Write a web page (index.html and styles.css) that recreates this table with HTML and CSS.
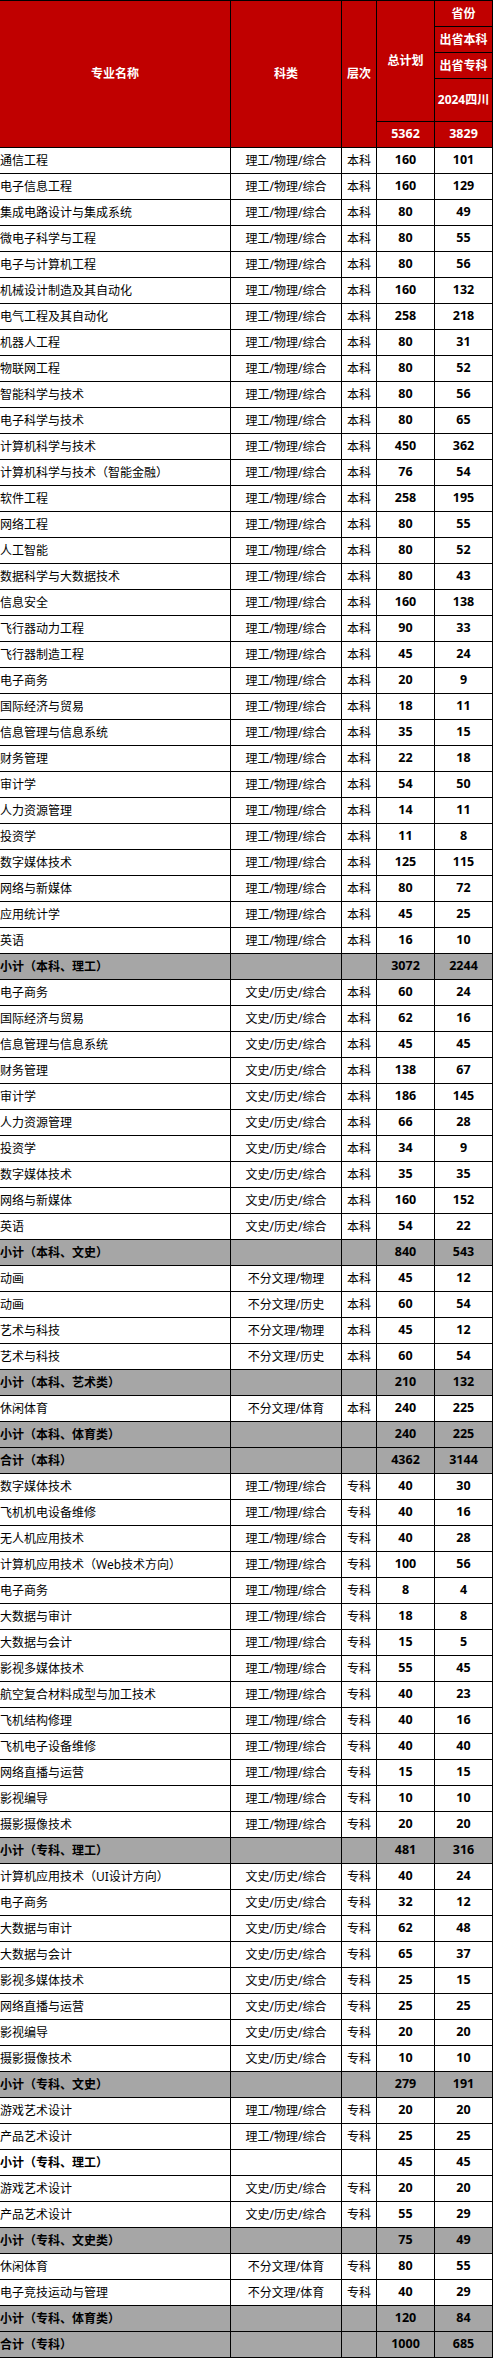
FILE: index.html
```html
<!DOCTYPE html>
<html lang="zh-CN">
<head>
<meta charset="utf-8">
<title>招生计划</title>
<link rel="stylesheet" href="styles.css">
</head>
<body>
<div class="sheet">
  <div class="c hd h-name">专业名称</div>
  <div class="c hd h-type">科类</div>
  <div class="c hd h-level">层次</div>
  <div class="c hd h-total">总计划</div>
  <div class="c hd h-p1">省份</div>
  <div class="c hd h-p2">出省本科</div>
  <div class="c hd h-p3">出省专科</div>
  <div class="c hd h-p4">2024四川</div>
  <div class="c hd num h-t5">5362</div>
  <div class="c hd num h-t6">3829</div>

  <div class="r"><div class="c name">通信工程</div><div class="c">理工/物理/综合</div><div class="c">本科</div><div class="c num">160</div><div class="c num">101</div></div>
  <div class="r"><div class="c name">电子信息工程</div><div class="c">理工/物理/综合</div><div class="c">本科</div><div class="c num">160</div><div class="c num">129</div></div>
  <div class="r"><div class="c name">集成电路设计与集成系统</div><div class="c">理工/物理/综合</div><div class="c">本科</div><div class="c num">80</div><div class="c num">49</div></div>
  <div class="r"><div class="c name">微电子科学与工程</div><div class="c">理工/物理/综合</div><div class="c">本科</div><div class="c num">80</div><div class="c num">55</div></div>
  <div class="r"><div class="c name">电子与计算机工程</div><div class="c">理工/物理/综合</div><div class="c">本科</div><div class="c num">80</div><div class="c num">56</div></div>
  <div class="r"><div class="c name">机械设计制造及其自动化</div><div class="c">理工/物理/综合</div><div class="c">本科</div><div class="c num">160</div><div class="c num">132</div></div>
  <div class="r"><div class="c name">电气工程及其自动化</div><div class="c">理工/物理/综合</div><div class="c">本科</div><div class="c num">258</div><div class="c num">218</div></div>
  <div class="r"><div class="c name">机器人工程</div><div class="c">理工/物理/综合</div><div class="c">本科</div><div class="c num">80</div><div class="c num">31</div></div>
  <div class="r"><div class="c name">物联网工程</div><div class="c">理工/物理/综合</div><div class="c">本科</div><div class="c num">80</div><div class="c num">52</div></div>
  <div class="r"><div class="c name">智能科学与技术</div><div class="c">理工/物理/综合</div><div class="c">本科</div><div class="c num">80</div><div class="c num">56</div></div>
  <div class="r"><div class="c name">电子科学与技术</div><div class="c">理工/物理/综合</div><div class="c">本科</div><div class="c num">80</div><div class="c num">65</div></div>
  <div class="r"><div class="c name">计算机科学与技术</div><div class="c">理工/物理/综合</div><div class="c">本科</div><div class="c num">450</div><div class="c num">362</div></div>
  <div class="r"><div class="c name">计算机科学与技术（智能金融）</div><div class="c">理工/物理/综合</div><div class="c">本科</div><div class="c num">76</div><div class="c num">54</div></div>
  <div class="r"><div class="c name">软件工程</div><div class="c">理工/物理/综合</div><div class="c">本科</div><div class="c num">258</div><div class="c num">195</div></div>
  <div class="r"><div class="c name">网络工程</div><div class="c">理工/物理/综合</div><div class="c">本科</div><div class="c num">80</div><div class="c num">55</div></div>
  <div class="r"><div class="c name">人工智能</div><div class="c">理工/物理/综合</div><div class="c">本科</div><div class="c num">80</div><div class="c num">52</div></div>
  <div class="r"><div class="c name">数据科学与大数据技术</div><div class="c">理工/物理/综合</div><div class="c">本科</div><div class="c num">80</div><div class="c num">43</div></div>
  <div class="r"><div class="c name">信息安全</div><div class="c">理工/物理/综合</div><div class="c">本科</div><div class="c num">160</div><div class="c num">138</div></div>
  <div class="r"><div class="c name">飞行器动力工程</div><div class="c">理工/物理/综合</div><div class="c">本科</div><div class="c num">90</div><div class="c num">33</div></div>
  <div class="r"><div class="c name">飞行器制造工程</div><div class="c">理工/物理/综合</div><div class="c">本科</div><div class="c num">45</div><div class="c num">24</div></div>
  <div class="r"><div class="c name">电子商务</div><div class="c">理工/物理/综合</div><div class="c">本科</div><div class="c num">20</div><div class="c num">9</div></div>
  <div class="r"><div class="c name">国际经济与贸易</div><div class="c">理工/物理/综合</div><div class="c">本科</div><div class="c num">18</div><div class="c num">11</div></div>
  <div class="r"><div class="c name">信息管理与信息系统</div><div class="c">理工/物理/综合</div><div class="c">本科</div><div class="c num">35</div><div class="c num">15</div></div>
  <div class="r"><div class="c name">财务管理</div><div class="c">理工/物理/综合</div><div class="c">本科</div><div class="c num">22</div><div class="c num">18</div></div>
  <div class="r"><div class="c name">审计学</div><div class="c">理工/物理/综合</div><div class="c">本科</div><div class="c num">54</div><div class="c num">50</div></div>
  <div class="r"><div class="c name">人力资源管理</div><div class="c">理工/物理/综合</div><div class="c">本科</div><div class="c num">14</div><div class="c num">11</div></div>
  <div class="r"><div class="c name">投资学</div><div class="c">理工/物理/综合</div><div class="c">本科</div><div class="c num">11</div><div class="c num">8</div></div>
  <div class="r"><div class="c name">数字媒体技术</div><div class="c">理工/物理/综合</div><div class="c">本科</div><div class="c num">125</div><div class="c num">115</div></div>
  <div class="r"><div class="c name">网络与新媒体</div><div class="c">理工/物理/综合</div><div class="c">本科</div><div class="c num">80</div><div class="c num">72</div></div>
  <div class="r"><div class="c name">应用统计学</div><div class="c">理工/物理/综合</div><div class="c">本科</div><div class="c num">45</div><div class="c num">25</div></div>
  <div class="r"><div class="c name">英语</div><div class="c">理工/物理/综合</div><div class="c">本科</div><div class="c num">16</div><div class="c num">10</div></div>
  <div class="r sub"><div class="c name">小计（本科、理工）</div><div class="c"></div><div class="c"></div><div class="c num">3072</div><div class="c num">2244</div></div>

  <div class="r"><div class="c name">电子商务</div><div class="c">文史/历史/综合</div><div class="c">本科</div><div class="c num">60</div><div class="c num">24</div></div>
  <div class="r"><div class="c name">国际经济与贸易</div><div class="c">文史/历史/综合</div><div class="c">本科</div><div class="c num">62</div><div class="c num">16</div></div>
  <div class="r"><div class="c name">信息管理与信息系统</div><div class="c">文史/历史/综合</div><div class="c">本科</div><div class="c num">45</div><div class="c num">45</div></div>
  <div class="r"><div class="c name">财务管理</div><div class="c">文史/历史/综合</div><div class="c">本科</div><div class="c num">138</div><div class="c num">67</div></div>
  <div class="r"><div class="c name">审计学</div><div class="c">文史/历史/综合</div><div class="c">本科</div><div class="c num">186</div><div class="c num">145</div></div>
  <div class="r"><div class="c name">人力资源管理</div><div class="c">文史/历史/综合</div><div class="c">本科</div><div class="c num">66</div><div class="c num">28</div></div>
  <div class="r"><div class="c name">投资学</div><div class="c">文史/历史/综合</div><div class="c">本科</div><div class="c num">34</div><div class="c num">9</div></div>
  <div class="r"><div class="c name">数字媒体技术</div><div class="c">文史/历史/综合</div><div class="c">本科</div><div class="c num">35</div><div class="c num">35</div></div>
  <div class="r"><div class="c name">网络与新媒体</div><div class="c">文史/历史/综合</div><div class="c">本科</div><div class="c num">160</div><div class="c num">152</div></div>
  <div class="r"><div class="c name">英语</div><div class="c">文史/历史/综合</div><div class="c">本科</div><div class="c num">54</div><div class="c num">22</div></div>
  <div class="r sub"><div class="c name">小计（本科、文史）</div><div class="c"></div><div class="c"></div><div class="c num">840</div><div class="c num">543</div></div>

  <div class="r"><div class="c name">动画</div><div class="c">不分文理/物理</div><div class="c">本科</div><div class="c num">45</div><div class="c num">12</div></div>
  <div class="r"><div class="c name">动画</div><div class="c">不分文理/历史</div><div class="c">本科</div><div class="c num">60</div><div class="c num">54</div></div>
  <div class="r"><div class="c name">艺术与科技</div><div class="c">不分文理/物理</div><div class="c">本科</div><div class="c num">45</div><div class="c num">12</div></div>
  <div class="r"><div class="c name">艺术与科技</div><div class="c">不分文理/历史</div><div class="c">本科</div><div class="c num">60</div><div class="c num">54</div></div>
  <div class="r sub"><div class="c name">小计（本科、艺术类）</div><div class="c"></div><div class="c"></div><div class="c num">210</div><div class="c num">132</div></div>

  <div class="r"><div class="c name">休闲体育</div><div class="c">不分文理/体育</div><div class="c">本科</div><div class="c num">240</div><div class="c num">225</div></div>
  <div class="r sub"><div class="c name">小计（本科、体育类）</div><div class="c"></div><div class="c"></div><div class="c num">240</div><div class="c num">225</div></div>
  <div class="r sub"><div class="c name">合计（本科）</div><div class="c"></div><div class="c"></div><div class="c num">4362</div><div class="c num">3144</div></div>

  <div class="r"><div class="c name">数字媒体技术</div><div class="c">理工/物理/综合</div><div class="c">专科</div><div class="c num">40</div><div class="c num">30</div></div>
  <div class="r"><div class="c name">飞机机电设备维修</div><div class="c">理工/物理/综合</div><div class="c">专科</div><div class="c num">40</div><div class="c num">16</div></div>
  <div class="r"><div class="c name">无人机应用技术</div><div class="c">理工/物理/综合</div><div class="c">专科</div><div class="c num">40</div><div class="c num">28</div></div>
  <div class="r"><div class="c name">计算机应用技术（Web技术方向）</div><div class="c">理工/物理/综合</div><div class="c">专科</div><div class="c num">100</div><div class="c num">56</div></div>
  <div class="r"><div class="c name">电子商务</div><div class="c">理工/物理/综合</div><div class="c">专科</div><div class="c num">8</div><div class="c num">4</div></div>
  <div class="r"><div class="c name">大数据与审计</div><div class="c">理工/物理/综合</div><div class="c">专科</div><div class="c num">18</div><div class="c num">8</div></div>
  <div class="r"><div class="c name">大数据与会计</div><div class="c">理工/物理/综合</div><div class="c">专科</div><div class="c num">15</div><div class="c num">5</div></div>
  <div class="r"><div class="c name">影视多媒体技术</div><div class="c">理工/物理/综合</div><div class="c">专科</div><div class="c num">55</div><div class="c num">45</div></div>
  <div class="r"><div class="c name">航空复合材料成型与加工技术</div><div class="c">理工/物理/综合</div><div class="c">专科</div><div class="c num">40</div><div class="c num">23</div></div>
  <div class="r"><div class="c name">飞机结构修理</div><div class="c">理工/物理/综合</div><div class="c">专科</div><div class="c num">40</div><div class="c num">16</div></div>
  <div class="r"><div class="c name">飞机电子设备维修</div><div class="c">理工/物理/综合</div><div class="c">专科</div><div class="c num">40</div><div class="c num">40</div></div>
  <div class="r"><div class="c name">网络直播与运营</div><div class="c">理工/物理/综合</div><div class="c">专科</div><div class="c num">15</div><div class="c num">15</div></div>
  <div class="r"><div class="c name">影视编导</div><div class="c">理工/物理/综合</div><div class="c">专科</div><div class="c num">10</div><div class="c num">10</div></div>
  <div class="r"><div class="c name">摄影摄像技术</div><div class="c">理工/物理/综合</div><div class="c">专科</div><div class="c num">20</div><div class="c num">20</div></div>
  <div class="r sub"><div class="c name">小计（专科、理工）</div><div class="c"></div><div class="c"></div><div class="c num">481</div><div class="c num">316</div></div>

  <div class="r"><div class="c name">计算机应用技术（UI设计方向）</div><div class="c">文史/历史/综合</div><div class="c">专科</div><div class="c num">40</div><div class="c num">24</div></div>
  <div class="r"><div class="c name">电子商务</div><div class="c">文史/历史/综合</div><div class="c">专科</div><div class="c num">32</div><div class="c num">12</div></div>
  <div class="r"><div class="c name">大数据与审计</div><div class="c">文史/历史/综合</div><div class="c">专科</div><div class="c num">62</div><div class="c num">48</div></div>
  <div class="r"><div class="c name">大数据与会计</div><div class="c">文史/历史/综合</div><div class="c">专科</div><div class="c num">65</div><div class="c num">37</div></div>
  <div class="r"><div class="c name">影视多媒体技术</div><div class="c">文史/历史/综合</div><div class="c">专科</div><div class="c num">25</div><div class="c num">15</div></div>
  <div class="r"><div class="c name">网络直播与运营</div><div class="c">文史/历史/综合</div><div class="c">专科</div><div class="c num">25</div><div class="c num">25</div></div>
  <div class="r"><div class="c name">影视编导</div><div class="c">文史/历史/综合</div><div class="c">专科</div><div class="c num">20</div><div class="c num">20</div></div>
  <div class="r"><div class="c name">摄影摄像技术</div><div class="c">文史/历史/综合</div><div class="c">专科</div><div class="c num">10</div><div class="c num">10</div></div>
  <div class="r sub"><div class="c name">小计（专科、文史）</div><div class="c"></div><div class="c"></div><div class="c num">279</div><div class="c num">191</div></div>

  <div class="r"><div class="c name">游戏艺术设计</div><div class="c">理工/物理/综合</div><div class="c">专科</div><div class="c num">20</div><div class="c num">20</div></div>
  <div class="r"><div class="c name">产品艺术设计</div><div class="c">理工/物理/综合</div><div class="c">专科</div><div class="c num">25</div><div class="c num">25</div></div>
  <div class="r sub plain"><div class="c name">小计（专科、理工）</div><div class="c"></div><div class="c"></div><div class="c num">45</div><div class="c num">45</div></div>
  <div class="r"><div class="c name">游戏艺术设计</div><div class="c">文史/历史/综合</div><div class="c">专科</div><div class="c num">20</div><div class="c num">20</div></div>
  <div class="r"><div class="c name">产品艺术设计</div><div class="c">文史/历史/综合</div><div class="c">专科</div><div class="c num">55</div><div class="c num">29</div></div>
  <div class="r sub"><div class="c name">小计（专科、文史类）</div><div class="c"></div><div class="c"></div><div class="c num">75</div><div class="c num">49</div></div>

  <div class="r"><div class="c name">休闲体育</div><div class="c">不分文理/体育</div><div class="c">专科</div><div class="c num">80</div><div class="c num">55</div></div>
  <div class="r"><div class="c name">电子竞技运动与管理</div><div class="c">不分文理/体育</div><div class="c">专科</div><div class="c num">40</div><div class="c num">29</div></div>
  <div class="r sub"><div class="c name">小计（专科、体育类）</div><div class="c"></div><div class="c"></div><div class="c num">120</div><div class="c num">84</div></div>
  <div class="r sub"><div class="c name">合计（专科）</div><div class="c"></div><div class="c"></div><div class="c num">1000</div><div class="c num">685</div></div>
</div>
</body>
</html>
```
FILE: styles.css
```css
html, body {
  margin: 0;
  padding: 0;
  background: #fff;
}

body {
  font-family: "Noto Sans", "Noto Sans CJK SC", sans-serif;
  font-size: 12px;
  color: #000;
}

.sheet {
  display: grid;
  grid-template-columns: 230px 110px 34px 57px 57px;
  grid-template-rows: 25px 25px 25px 42px 25px;
  grid-auto-rows: 25px;
  gap: 1px;
  width: max-content;
  padding: 1px 1px 1px 0;
  background: #000;
}

.r {
  display: contents;
}

.c {
  display: flex;
  align-items: center;
  justify-content: center;
  background: #fff;
  white-space: nowrap;
  overflow: hidden;
  line-height: 1;
}

.name {
  justify-content: flex-start;
}

.num {
  font-weight: 700;
  font-size: 12.5px;
}

.sub .c {
  background: #a6a6a6;
}

.sub.plain .c {
  background: #fff;
}

.sub .name {
  font-weight: 700;
}

.hd {
  background: #c00000;
  color: #fff;
  font-weight: 700;
}

.h-name { grid-column: 1; grid-row: 1 / span 5; }
.h-type { grid-column: 2; grid-row: 1 / span 5; }
.h-level { grid-column: 3; grid-row: 1 / span 5; }
.h-total { grid-column: 4; grid-row: 1 / span 4; }
.h-p1 { grid-column: 5; grid-row: 1; }
.h-p2 { grid-column: 5; grid-row: 2; }
.h-p3 { grid-column: 5; grid-row: 3; }
.h-p4 { grid-column: 5; grid-row: 4; }
.h-t5 { grid-column: 4; grid-row: 5; }
.h-t6 { grid-column: 5; grid-row: 5; }
```
